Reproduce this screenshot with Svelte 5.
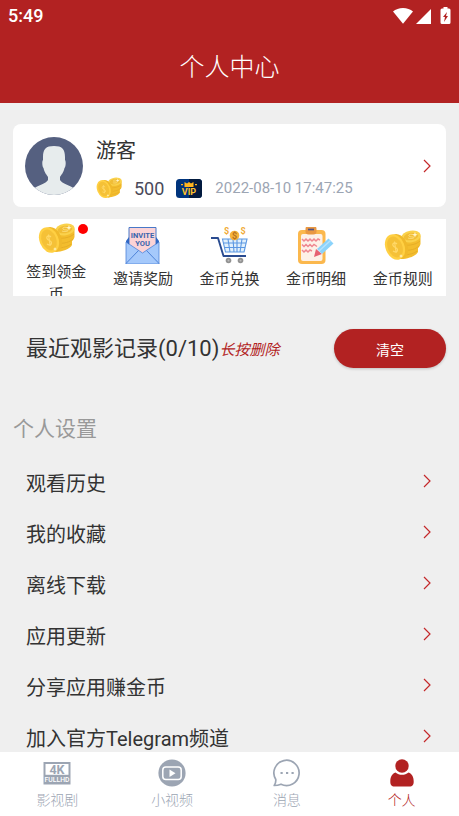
<script>
  const shortcuts = [
    { label: '签到领金币', icon: 'coins', badge: true },
    { label: '邀请奖励', icon: 'invite' },
    { label: '金币兑换', icon: 'cart' },
    { label: '金币明细', icon: 'notes' },
    { label: '金币规则', icon: 'coins' }
  ];
  const settings = ['观看历史', '我的收藏', '离线下载', '应用更新', '分享应用赚金币', '加入官方Telegram频道'];
  const tabs = [
    { label: '影视剧', icon: 'film' },
    { label: '小视频', icon: 'video' },
    { label: '消息', icon: 'chat' },
    { label: '个人', icon: 'person' }
  ];
  let active = $state('个人');
</script>

{#snippet chevron()}
  <svg class="chevron" viewBox="0 0 8 14" aria-hidden="true"><path d="M1 1l6 6-6 6" fill="none" stroke="#c4282a" stroke-width="1.2" /></svg>
{/snippet}

{#snippet coins()}
  <svg viewBox="0 0 37 37" aria-hidden="true">
    <g fill="#f3bd2e">
      <path d="M17 22l17-2v5c-2 4-10 7-17 7z" />
      <path d="M18 12l18.500-3v8c-1 5-8 8-18 9z" />
    </g>
    <path d="M19 18c7 1 14-1 17-4M19 23c7 1 13-1 16-4M19 28c6 0 12-2 14-4" fill="none" stroke="#e2a925" stroke-width=".8" />
    <ellipse cx="27" cy="9.500" rx="9.800" ry="5.800" transform="rotate(-9 27 9.500)" fill="#fad24c" />
    <ellipse cx="27" cy="9.500" rx="7.300" ry="3.700" transform="rotate(-9 27 9.500)" fill="#f1bd35" />
    <path d="M30 8c-3-1.500-6-.5-5 1s5 .5 5 1.500-4 1.500-6 .5" fill="none" stroke="#fee080" stroke-width=".9" />
    <ellipse cx="14.500" cy="19.500" rx="9" ry="13" transform="rotate(-22 14.500 19.500)" fill="#f0b92b" />
    <ellipse cx="11" cy="20" rx="9.500" ry="13.200" transform="rotate(-22 11 20)" fill="#ffd043" />
    <ellipse cx="11" cy="20" rx="7.300" ry="10.800" transform="rotate(-22 11 20)" fill="#f5c137" />
    <path d="M13 17c-2-2-5-1-4 1.500s4 1.500 4.500 4-2.500 3-4.500 1.500M10.500 14.500l1.700 11.500" fill="none" stroke="#ffd96a" stroke-width="1.200" />
    <path d="M31 5l.7 2 2 .8-2 .7-.7 2-.8-2-2-.7 2-.8zM17 27l.5 1.500 1.500.5-1.500.5-.5 1.500-.5-1.500L15 29l1.500-.5z" fill="#fff6cf" />
  </svg>
{/snippet}

{#snippet art(name)}
  {#if name === 'coins'}
    {@render coins()}
  {:else if name === 'invite'}
    <svg viewBox="0 0 37 37" aria-hidden="true">
      <path d="M2 14h33v23H2z" fill="#2f67c4" />
      <path d="M5 .5h27v28H5z" fill="#fbd3d6" stroke="#4878c8" />
      <path d="M2 15l16.500 11L35 15v22H2z" fill="#a5c9fb" stroke="#4e83d8" stroke-width=".8" />
      <path d="M5 10l-3 4 3 3.500zM32 10l3 4-3 3.500z" fill="#2f67c4" />
      <path d="M2 36.500l12.500-13M35 36.500l-12.500-13" stroke="#4e83d8" />
      <g fill="#3964ad" font-family="Roboto, sans-serif" font-weight="700" font-size="7.500" text-anchor="middle"><text x="18.500" y="10.500">INVITE</text><text x="18.500" y="18.500">YOU</text></g>
    </svg>
  {:else if name === 'cart'}
    <svg viewBox="0 0 37 37" aria-hidden="true">
      <path d="M12 12h24l-2 13H14z" fill="#e1f0fc" />
      <path d="M11.500 12H36l-3 13H14.500zM12.500 16h22.500M13.500 20.500h20.500M17 12l2 13M22 12l1 13M26 12v13M31 12l-2 13" fill="none" stroke="#5b97e2" stroke-width="1.100" />
      <path d="M0 11h7l5.500 18H35" fill="none" stroke="#294b90" stroke-width="1.900" stroke-linejoin="round" />
      <g fill="#929292"><circle cx="17.500" cy="33.500" r="2.800" /><circle cx="29.500" cy="33.500" r="2.800" /></g>
      <g fill="#bbb"><circle cx="17.500" cy="33.500" r="1" /><circle cx="29.500" cy="33.500" r="1" /></g>
      <circle cx="23.500" cy="8.500" r="4.800" fill="#f6b43b" />
      <g font-family="Roboto, sans-serif" font-weight="700" font-size="9" text-anchor="middle"><text x="15.500" y="7" fill="#f0aa35">$</text><text x="32" y="7" fill="#f0aa35">$</text><text x="23.500" y="11.800" fill="#b5701d">$</text></g>
    </svg>
  {:else}
    <svg viewBox="0 0 37 37" aria-hidden="true">
      <rect x="0" y="3" width="27.500" height="34" rx="4" fill="#fbb84d" />
      <rect x="3" y="7" width="21.500" height="27" rx="2" fill="#fdf1e8" />
      <rect x="7.500" y="-1" width="11" height="8.500" rx="3" fill="#e99843" />
      <path d="M10 2.500h6" stroke="#4e5287" stroke-width="1.700" />
      <g fill="none" stroke="#ef8790" stroke-width="1.500"><path d="M4 12l2 2 2-2 2 2 2-2 2 2 2-2 2 2 2-2 2 1" /><path d="M4 17.500l2 2 2-2 2 2 2-2 2 2 2-2 3 2" /><path d="M4 23l2 2 2-2 2 2 2-2 2 1" /></g>
      <path d="M16 30l2-8 6 5z" fill="#e66172" />
      <path d="M19 22l11.500-10.500 5 5L24 27z" fill="#8bd3fb" />
      <path d="M21 24l11.500-10.500" stroke="#b5e2ff" stroke-width="1.500" />
    </svg>
  {/if}
{/snippet}

{#snippet tabIcon(name)}
  {#if name === 'film'}
    <svg viewBox="0 0 28 28" aria-hidden="true">
      <path d="M.5 3h27v22.500H.5z" fill="currentColor" /><path d="M2.500 5h23v10.800h-23z" fill="#fff" />
      <g font-family="Roboto, sans-serif" font-weight="700" text-anchor="middle"><text x="14" y="14.800" font-size="12.500" fill="currentColor">4K</text><text x="14" y="22.800" font-size="6.800" font-weight="500" fill="#fff">FULLHD</text></g>
    </svg>
  {:else if name === 'video'}
    <svg viewBox="0 0 28 28" aria-hidden="true"><circle cx="14" cy="14" r="13.600" fill="currentColor" /><rect x="4.800" y="8" width="18.400" height="12.500" rx="3" fill="none" stroke="#fff" stroke-width="1.500" /><path d="M11.500 10.500v7.500l6-3.700z" fill="#fff" /></svg>
  {:else if name === 'chat'}
    <svg viewBox="0 0 28 28" aria-hidden="true"><path d="M2.800 20.500A12.600 12.600 0 1 1 8 25.200c-2 .8-4.200 1.300-6.800 1.300C2.300 25 3 23 2.800 20.500z" fill="none" stroke="currentColor" stroke-width="1.700" stroke-linejoin="round" /><path d="M7.500 13h2.200v2H7.500zM13 13h2.200v2H13zM18.500 13h2.200v2h-2.200z" fill="currentColor" /></svg>
  {:else}
    <svg viewBox="0 0 28 28" aria-hidden="true"><circle cx="14" cy="7" r="6.700" fill="currentColor" /><path d="M7.500 13.500c2 1.600 4 2.300 6.500 2.300s4.500-.7 6.500-2.300c3.500 1.200 5.200 4.500 5.200 9 0 3.500-1.200 5-4.200 5h-15c-3 0-4.200-1.500-4.200-5 0-4.500 1.700-7.800 5.200-9z" fill="currentColor" /></svg>
  {/if}
{/snippet}

<div class="app">
  <header>
    <div class="status">
      <span>5:49</span>
      <svg width="60" height="18" viewBox="0 0 60 18" fill="#fff" aria-hidden="true">
        <path d="M1 4.500C6-.2 16-.2 21 4.500L11 16.800z" />
        <path d="M39 2v15H24z" />
        <path d="M51.500 1.500V0h4v1.500h1.500q1.500 0 1.500 1.500v12.500q0 1.500-1.500 1.500h-7q-1.500 0-1.500-1.500V3q0-1.500 1.500-1.500z" />
        <path d="M55 5l-4 5h2l-1 5 4-6h-2z" fill="#b22222" />
      </svg>
    </div>
    <h1>个人中心</h1>
  </header>

  <main>
    <a class="profile" href="#profile">
      <svg class="avatar" viewBox="0 0 58 58" aria-hidden="true">
        <defs><clipPath id="face"><circle cx="29" cy="29" r="29" /></clipPath></defs>
        <g clip-path="url(#face)"><path d="M0 0h58v58H0z" fill="#556080" /><path d="M18 20c0-8 3-11 11-11s11 3 11 11v3c1 1 1 6-.5 8-1 5-3.500 7-4.500 9v3c2 4 10 5 15 9v8H8v-8c5-4 13-5 15-9v-3c-1-2-3.500-4-4.500-9C17 29 17 24 18 23z" fill="#e7eced" /></g>
      </svg>
      <div class="info">
        <h2>游客</h2>
        <div class="meta">
          <span class="coin">{@render coins()}</span>
          <span class="points">500</span>
          <svg class="vip" viewBox="0 0 26 19" aria-label="VIP">
            <rect width="26" height="19" rx="3.500" fill="#00347d" /><path d="M13 0h9.500q3.500 0 3.500 3.500v12q0 3.500-3.500 3.500H13z" fill="#021a3e" />
            <path d="M8.500 3l2.500 1.500L13 3l2 1.500L17.500 3v5h-9zM5 5h2v1.200H5zM19 5h2v1.200h-2z" fill="#ffb51e" />
            <text x="13" y="16" text-anchor="middle" font-family="Roboto, sans-serif" font-size="9" font-weight="700" fill="#ffc32e">VIP</text>
          </svg>
          <time>2022-08-10 17:47:25</time>
        </div>
      </div>
      {@render chevron()}
    </a>

    <section class="shortcuts">
      {#each shortcuts as item}
        <button class:wrapped={item.label.length > 4}>
          <span class="art">{@render art(item.icon)}{#if item.badge}<i class="dot"></i>{/if}</span>
          <span>{item.label}</span>
        </button>
      {/each}
    </section>

    <section class="records">
      <h2>最近观影记录(0/10)</h2>
      <em>长按删除</em>
      <button>清空</button>
    </section>

    <h3>个人设置</h3>
    <ul>
      {#each settings as label}
        <li><a href="#settings"><span>{label}</span>{@render chevron()}</a></li>
      {/each}
    </ul>
  </main>

  <nav>
    {#each tabs as tab}
      <button class:active={active === tab.label} onclick={() => (active = tab.label)}>
        {@render tabIcon(tab.icon)}
        <span>{tab.label}</span>
      </button>
    {/each}
  </nav>
</div>

<style>
  .app {
    display: flex;
    flex-direction: column;
    height: 100vh;
    background: #efefef;
    color: #333;
    font-family: Roboto, 'Noto Sans CJK SC', sans-serif;
  }
  h1, h2, h3, ul { margin: 0; padding: 0; font-weight: 400; }
  svg { display: block; flex: none; }
  button { border: 0; margin: 0; padding: 0; background: none; color: inherit; font: inherit; cursor: pointer; }
  a { color: inherit; text-decoration: none; }

  header { flex: none; background: #b22222; color: #fff; }
  .status {
    display: flex;
    justify-content: space-between;
    align-items: center;
    height: 31px;
    padding: 0 7px 0 8px;
    font-size: 18px;
    font-weight: 500;
  }
  h1 { padding-top: 2px; font-size: 25px; font-weight: 300; line-height: 70px; text-align: center; }

  main { flex: 1; min-height: 0; overflow: hidden; padding: 21px 13px 0; }
  .profile {
    display: flex;
    align-items: center;
    gap: 13px;
    padding: 9px 15px 9px 12px;
    border-radius: 8px;
    background: #fff;
  }
  .avatar { width: 58px; height: 58px; }
  .info { flex: 1; }
  .info h2 { font-size: 20px; line-height: 36px; }
  .meta { display: flex; align-items: center; height: 20px; margin-top: 9px; }
  .coin svg { width: 26px; height: 26px; }
  .points { margin: 0 12px; color: #4a4a5a; font-size: 18px; }
  .vip { width: 26px; height: 19px; }
  time { margin-left: 13px; color: #9ca5b3; font-size: 15px; }
  .chevron { width: 8px; height: 14px; }

  .shortcuts { display: flex; height: 77px; margin-top: 12px; overflow: hidden; background: #fff; }
  .shortcuts button {
    flex: 1 1 0;
    display: flex;
    flex-direction: column;
    align-items: center;
    padding: 8px 8px 0;
    font-size: 15px;
    line-height: 22px;
    text-align: center;
  }
  .shortcuts .wrapped { padding-top: 1px; }
  .art { position: relative; margin-bottom: 4px; }
  .art svg { width: 37px; height: 37px; }
  .dot { position: absolute; top: 4px; right: -13px; width: 10px; height: 10px; border-radius: 50%; background: #f00; }

  .records { display: flex; align-items: center; margin-top: 33px; padding-left: 13px; }
  .records h2 { font-size: 22px; line-height: 39px; }
  em { color: #b22222; font-size: 15px; line-height: 20px; padding-top: 2px; }
  .records button {
    width: 112px;
    height: 39px;
    margin-left: auto;
    border-radius: 20px;
    background: #b22222;
    box-shadow: 0 1px 3px #0003;
    color: #fff;
    font-size: 14px;
  }

  h3 { margin: 46px 0 13px; color: #999; font-size: 21px; line-height: 30px; }
  ul { list-style: none; }
  li a {
    display: flex;
    align-items: center;
    justify-content: space-between;
    height: 51px;
    padding: 0 15px 0 13px;
    font-size: 20px;
  }
  li .chevron, li :global(.chevron) { margin-bottom: 3px; }

  nav { flex: none; display: flex; height: 64px; background: #fff; color: #9ca5b3; }
  nav button { flex: 1; display: flex; flex-direction: column; align-items: center; padding-top: 7px; font-size: 14px; font-weight: 300; line-height: 20px; }
  nav svg { width: 28px; height: 28px; margin-bottom: 3px; }
  .active { color: #b22222; }
</style>
